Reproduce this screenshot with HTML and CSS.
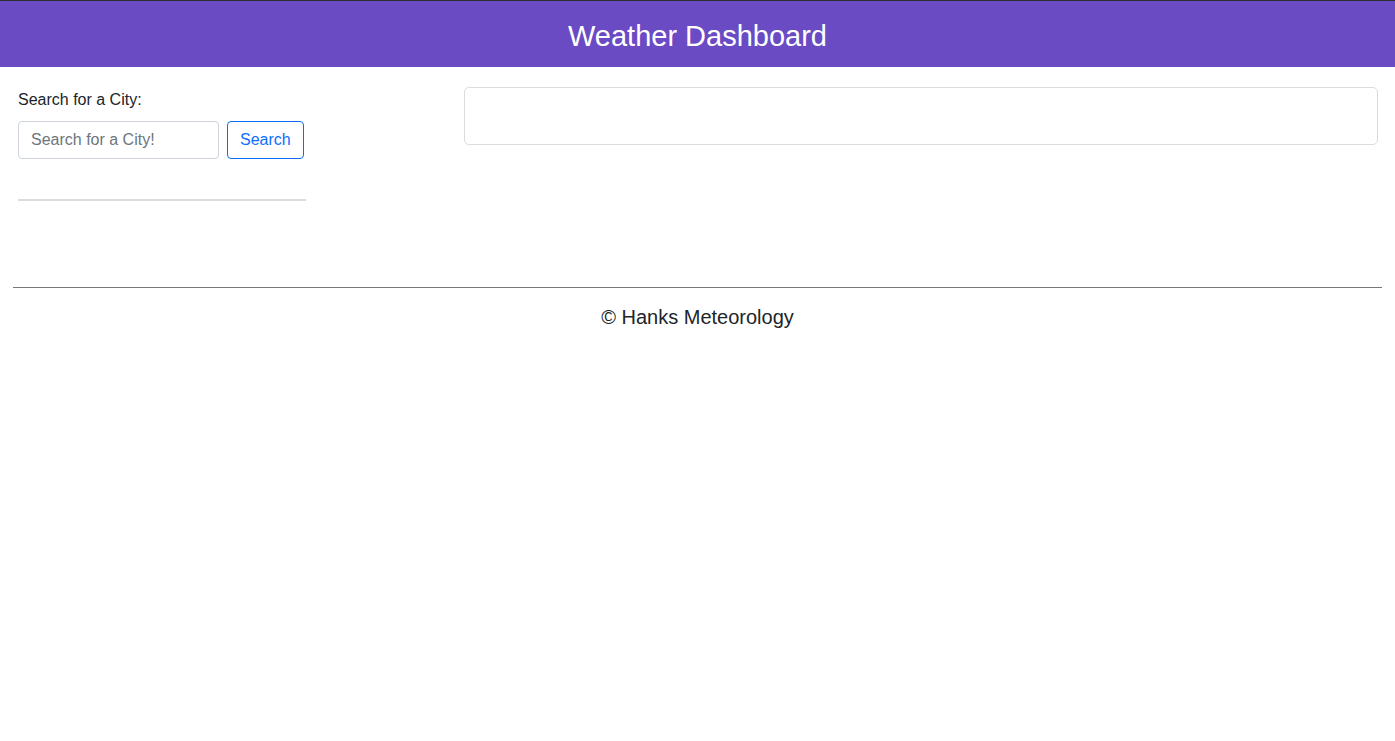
FILE: index.html
```html
<!DOCTYPE html>
<html lang="en">
<head>
<meta charset="utf-8">
<title>Weather Dashboard</title>
<link rel="stylesheet" href="styles.css">
</head>
<body>
<header class="site-header">
  <h1 class="site-title">Weather Dashboard</h1>
</header>
<main class="layout">
  <section class="search-col">
    <label class="search-label" for="city">Search for a City:</label>
    <div class="search-row">
      <input id="city" class="search-input" type="text" placeholder="Search for a City!">
      <button class="search-btn" type="button">Search</button>
    </div>
    <hr class="search-divider">
  </section>
  <section class="current-card"></section>
</main>
<footer class="site-footer">
  <hr class="footer-rule">
  <p class="footer-text">© Hanks Meteorology</p>
</footer>
</body>
</html>
```
FILE: styles.css
```css
* { box-sizing: border-box; }
html, body { margin: 0; padding: 0; background: #fff; }
body {
  font-family: "Liberation Sans", Arial, sans-serif;
  color: #212529;
  font-size: 16px;
  line-height: 1.5;
}
.site-header {
  border-top: 1px solid #2f2f2f;
  background: #6a4bc4;
  height: 67px;
  padding-top: 4px;
  display: flex;
  align-items: center;
  justify-content: center;
}
.site-title {
  margin: 0;
  color: #fff;
  font-size: 29px;
  font-weight: 400;
  line-height: 1.2;
}
.layout {
  display: flex;
  align-items: flex-start;
  padding: 20px 17px 0 18px;
}
.search-col {
  width: 288px;
  padding-top: 1px;
  display: flex;
  flex-direction: column;
}
.search-label {
  display: block;
  font-size: 16px;
  line-height: 24px;
  margin-bottom: 9px;
}
.search-row {
  display: flex;
  gap: 8px;
}
.search-input {
  width: 201px;
  height: 38px;
  padding: 0 12px;
  border: 1px solid #ced4da;
  border-radius: 4px;
  font-family: inherit;
  font-size: 16px;
  color: #212529;
}
.search-input::placeholder { color: #6c757d; }
.search-btn {
  height: 38px;
  padding: 0 12px;
  background: #fff;
  border: 1px solid #0d6efd;
  border-radius: 4px;
  color: #0d6efd;
  font-family: inherit;
  font-size: 16px;
}
.search-divider {
  margin: 40px 0 0;
  border: 0;
  border-top: 2px solid #dcdcdc;
  width: 288px;
}
.current-card {
  margin-left: auto;
  width: 914px;
  height: 58px;
  border: 1px solid #dcdcdc;
  border-radius: 5px;
}
.site-footer {
  margin-top: 86px;
  padding: 0 13px;
}
.footer-rule {
  margin: 0;
  border: 0;
  border-top: 1px solid #777;
}
.footer-text {
  margin: 14px 0 0;
  text-align: center;
  font-size: 20px;
  line-height: 30px;
  font-weight: 500;
}
```
